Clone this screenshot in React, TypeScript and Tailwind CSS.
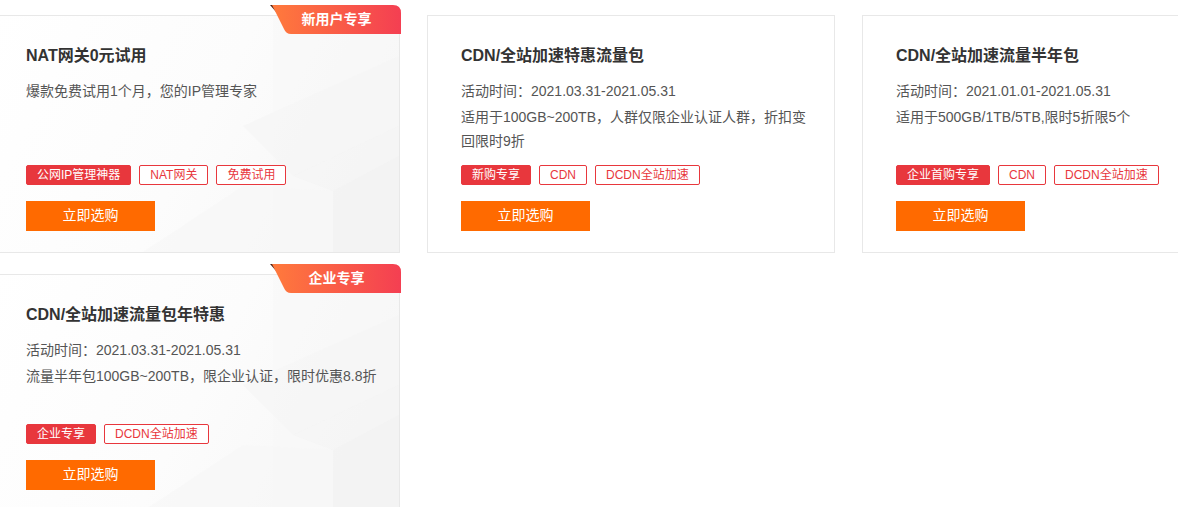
type Tag = { label: string; solid?: boolean };

type Promo = {
  title: string;
  time?: string;
  desc: string;
  tags: Tag[];
  badge?: string;
};

const promos: Promo[] = [
  {
    title: 'NAT网关0元试用',
    desc: '爆款免费试用1个月，您的IP管理专家',
    tags: [{ label: '公网IP管理神器', solid: true }, { label: 'NAT网关' }, { label: '免费试用' }],
    badge: '新用户专享',
  },
  {
    title: 'CDN/全站加速特惠流量包',
    time: '活动时间：2021.03.31-2021.05.31',
    desc: '适用于100GB~200TB，人群仅限企业认证人群，折扣变回限时9折',
    tags: [{ label: '新购专享', solid: true }, { label: 'CDN' }, { label: 'DCDN全站加速' }],
  },
  {
    title: 'CDN/全站加速流量半年包',
    time: '活动时间：2021.01.01-2021.05.31',
    desc: '适用于500GB/1TB/5TB,限时5折限5个',
    tags: [{ label: '企业首购专享', solid: true }, { label: 'CDN' }, { label: 'DCDN全站加速' }],
  },
  {
    title: 'CDN/全站加速流量包年特惠',
    time: '活动时间：2021.03.31-2021.05.31',
    desc: '流量半年包100GB~200TB，限企业认证，限时优惠8.8折',
    tags: [{ label: '企业专享', solid: true }, { label: 'DCDN全站加速' }],
    badge: '企业专享',
  },
];

function Backdrop() {
  return (
    <svg
      className="absolute inset-0 h-full w-full"
      viewBox="0 0 406 236"
      preserveAspectRatio="none"
    >
      <defs>
        <linearGradient id="bgfade" x1="0" y1="0" x2="1" y2="0.3">
          <stop offset="0" stopColor="#ffffff" />
          <stop offset="0.6" stopColor="#fcfcfc" />
          <stop offset="1" stopColor="#f7f7f7" />
        </linearGradient>
      </defs>
      <rect width="406" height="236" fill="url(#bgfade)" />
      <polygon points="280,0 406,0 406,236 280,236" fill="#f8f8f8" opacity="0.5" />
      <polygon points="250,110 406,40 406,110 300,160" fill="#f5f5f5" opacity="0.6" />
      <polygon points="300,160 406,110 406,236 340,236 340,175" fill="#f3f3f3" opacity="0.5" />
      <polygon points="150,236 250,170 340,175 340,236" fill="#f7f7f7" opacity="0.6" />
      <polygon points="340,175 406,140 406,236 340,236" fill="#f1f1f1" opacity="0.5" />
    </svg>
  );
}

function Badge({ text }: { text: string }) {
  return (
    <div className="absolute right-[-2px] top-[-11px] h-[29px] w-[131px]">
      <svg className="absolute inset-0" width="131" height="29" viewBox="0 0 131 29">
        <defs>
          <linearGradient id="badgefill" x1="0" y1="0" x2="1" y2="0">
            <stop offset="0" stopColor="#ff7a3c" />
            <stop offset="1" stopColor="#f43f52" />
          </linearGradient>
        </defs>
        <polygon points="0,0 7,0 7,8" fill="#4a2016" />
        <path d="M2 0 H123 Q131 0 131 8 V29 H21 Q16 29 14 24 Z" fill="url(#badgefill)" />
      </svg>
      <span className="relative flex h-full items-center justify-center pl-[2px] text-[14px] font-bold text-white">
        {text}
      </span>
    </div>
  );
}

function PromoCard({ promo }: { promo: Promo }) {
  return (
    <div className="relative h-[238px] border border-[#e8e8e8] bg-white pl-[33px] pr-[18px] pt-[28px]">
      {promo.badge && <Backdrop />}
      {promo.badge && <Badge text={promo.badge} />}
      <div className="relative">
        <h3 className="h-6 text-[16px] font-bold leading-6 text-[#333]">{promo.title}</h3>
        <div className="mt-[11px] h-[86px] text-[14px] leading-6 text-[#555]">
          {promo.time && <p className="mb-[2px]">{promo.time}</p>}
          <p>{promo.desc}</p>
        </div>
        <div className="flex gap-2">
          {promo.tags.map((tag) => (
            <span
              key={tag.label}
              className={
                tag.solid
                  ? 'flex h-5 items-center rounded-[2px] border border-[#e8373d] bg-[#e8373d] px-[10px] text-[12px] text-white'
                  : 'flex h-5 items-center rounded-[2px] border border-[#e8373d] bg-white px-[10px] text-[12px] text-[#e8373d]'
              }
            >
              {tag.label}
            </span>
          ))}
        </div>
        <button className="mt-4 flex h-[30px] w-[129px] items-center justify-center pb-[2px] bg-[#ff6a00] text-[14px] text-white">
          立即选购
        </button>
      </div>
    </div>
  );
}

export default function App() {
  return (
    <div
      className="h-[507px] w-full overflow-hidden bg-white"
      style={{ fontFamily: '"Liberation Sans", "Noto Sans CJK SC", sans-serif' }}
    >
      <div className="ml-[-8px] grid w-max grid-cols-[repeat(3,408px)] gap-x-[27px] gap-y-[21px] pt-[15px]">
        {promos.map((p) => (
          <PromoCard key={p.title} promo={p} />
        ))}
      </div>
    </div>
  );
}
